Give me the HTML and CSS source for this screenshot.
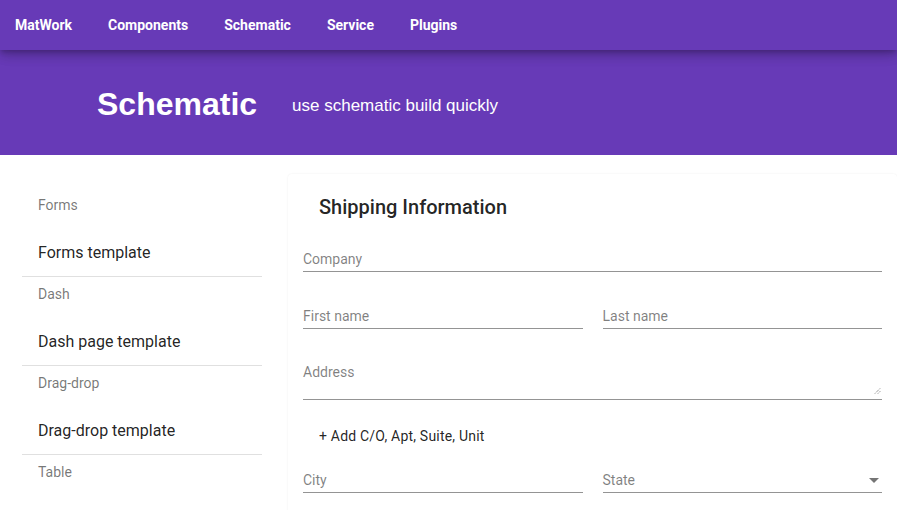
FILE: index.html
```html
<!DOCTYPE html>
<html>
<head>
<meta charset="utf-8">
<link rel="stylesheet" href="styles.css">
</head>
<body>
<nav class="topbar">
  <a class="nav-link">MatWork</a>
  <a class="nav-link">Components</a>
  <a class="nav-link">Schematic</a>
  <a class="nav-link">Service</a>
  <a class="nav-link">Plugins</a>
</nav>
<header class="hero">
  <h1 class="hero-title">Schematic</h1>
  <p class="hero-sub">use schematic build quickly</p>
</header>
<main class="content">
  <aside class="sidebar">
    <div class="group">
      <div class="subheader">Forms</div>
      <div class="item">Forms template</div>
    </div>
    <div class="group">
      <div class="subheader">Dash</div>
      <div class="item">Dash page template</div>
    </div>
    <div class="group">
      <div class="subheader">Drag-drop</div>
      <div class="item">Drag-drop template</div>
    </div>
    <div class="group last">
      <div class="subheader">Table</div>
    </div>
  </aside>
  <section class="card">
    <h2 class="card-title">Shipping Information</h2>
    <div class="row">
      <div class="field"><span class="label">Company</span></div>
    </div>
    <div class="row two">
      <div class="field"><span class="label">First name</span></div>
      <div class="field"><span class="label">Last name</span></div>
    </div>
    <div class="row addr">
      <div class="field area"><span class="label">Address</span>
        <svg class="resize" width="7" height="7" viewBox="0 0 7 7"><path d="M1 6.5 L6.5 1 M4 6.5 L6.5 4" stroke="#666" stroke-width="1" stroke-dasharray="1 1"/></svg>
      </div>
    </div>
    <div class="add-btn">+ Add C/O, Apt, Suite, Unit</div>
    <div class="row two">
      <div class="field"><span class="label">City</span></div>
      <div class="field select"><span class="label">State</span><span class="arrow"></span></div>
    </div>
  </section>
</main>
</body>
</html>
```
FILE: styles.css
```css
* { box-sizing: border-box; }
html, body { margin: 0; padding: 0; }
body {
  width: 897px;
  height: 510px;
  overflow: hidden;
  background: #fff;
  font-family: Roboto, "Helvetica Neue", sans-serif;
  color: rgba(0,0,0,0.87);
}
.topbar {
  position: relative;
  z-index: 2;
  height: 50px;
  background: #673ab7;
  display: flex;
  align-items: center;
  padding-left: 15px;
  box-shadow: 0 3px 5px -1px rgba(0,0,0,.2), 0 6px 10px 0 rgba(0,0,0,.14), 0 1px 18px 0 rgba(0,0,0,.12);
}
.nav-link {
  color: #fff;
  font-weight: 700;
  font-size: 14px;
  margin-right: 36px;
}
.hero {
  height: 105px;
  background: #673ab7;
  display: flex;
  align-items: center;
  padding-left: 97px;
  color: #fff;
  font-family: "Liberation Sans", Arial, sans-serif;
}
.hero-title {
  margin: 0;
  font-size: 32px;
  font-weight: 700;
  line-height: 1;
  position: relative;
  top: 1px;
}
.hero-sub {
  margin: 0 0 0 35px;
  font-size: 17px;
  position: relative;
  top: 3px;
}
.content {
  display: flex;
  align-items: flex-start;
  padding: 19px 0 0 22px;
}
.sidebar {
  width: 240px;
  padding-top: 14px;
  margin-right: 26px;
}
.group {
  border-bottom: 1px solid #e0e0e0;
}
.group.last { border-bottom: 0; }
.subheader {
  height: 34px;
  line-height: 34px;
  padding-left: 16px;
  font-size: 14px;
  color: rgba(0,0,0,0.54);
  font-weight: 400;
}
.item {
  padding: 20px 0 12px 16px;
  line-height: 22px;
  font-size: 16px;
  color: rgba(0,0,0,0.87);
}
.card {
  flex: 1;
  border-radius: 4px;
  box-shadow: 0 0 2px rgba(0,0,0,0.08);
  padding: 20px 15px 16px 15px;
  min-height: 400px;
}
.card-title {
  margin: 0 0 27px 16px;
  font-size: 20px;
  font-weight: 500;
  line-height: 26px;
  color: rgba(0,0,0,0.87);
}
.row {
  display: flex;
  gap: 20px;
  margin-bottom: 32px;
}
.row.addr { margin-bottom: 26px; }
.row.two .field { flex: 1; }
.field {
  flex: 1;
  position: relative;
  height: 25px;
  border-bottom: 1px solid #949494;
  display: flex;
  align-items: center;
  font-size: 14px;
}
.field.area {
  height: 39px;
  align-items: flex-start;
  padding-top: 2px;
}
.label {
  color: rgba(0,0,0,0.5);
  font-size: 14px;
  line-height: 18px;
}
.resize {
  position: absolute;
  right: 1px;
  bottom: 5px;
}
.select .arrow {
  margin-left: auto;
  margin-right: 3px;
  width: 0;
  height: 0;
  border-left: 5px solid transparent;
  border-right: 5px solid transparent;
  border-top: 5px solid rgba(0,0,0,0.54);
}
.add-btn {
  margin: 0 0 22px 16px;
  font-size: 14px;
  font-weight: 400;
  letter-spacing: 0.2px;
  line-height: 20px;
  color: rgba(0,0,0,0.87);
}
```
